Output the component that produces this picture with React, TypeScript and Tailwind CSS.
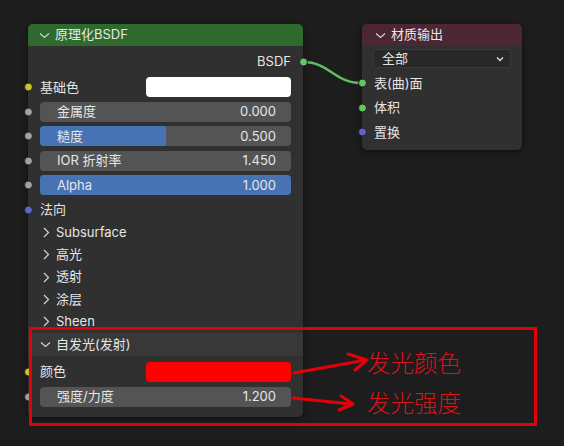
import React from "react";

const font = { fontFamily: 'Inter, "Noto Sans CJK SC", sans-serif' };

type SocketColor = "yellow" | "grey" | "purple" | "green";

const socketClass: Record<SocketColor, string> = {
  yellow: "bg-[#c7c729]",
  grey: "bg-[#a1a1a1]",
  purple: "bg-[#6363c7]",
  green: "bg-[#63c763]",
};

function Socket({ color, side = "left" }: { color: SocketColor; side?: "left" | "right" }) {
  return (
    <span
      className={`absolute top-1/2 -translate-y-1/2 w-[9px] h-[9px] rounded-full border-[0.5px] border-[#202020] ${
        socketClass[color]
      } ${side === "left" ? "-left-[4.5px]" : "-right-[4.5px]"}`}
    />
  );
}

function Chevron({ open }: { open: boolean }) {
  return (
    <svg width="11" height="11" viewBox="0 0 11 11" className="shrink-0">
      {open ? (
        <path d="M1 3.5 L5.5 7.5 L10 3.5" fill="none" stroke="#d4d4d4" strokeWidth="1.2" />
      ) : (
        <path d="M3 1 L7.5 5.5 L3 10" fill="none" stroke="#d4d4d4" strokeWidth="1.2" />
      )}
    </svg>
  );
}

function Slider({
  label,
  value,
  fill,
  socket,
}: {
  label: string;
  value: string;
  fill: number;
  socket?: SocketColor;
}) {
  return (
    <div className="relative h-[24.5px] flex items-center pl-[12px] pr-[12px]">
      {socket && <Socket color={socket} />}
      <div className="relative w-full h-[20px] rounded-[4px] bg-[#545454] overflow-hidden">
        <div className="absolute inset-y-0 left-0 bg-[#4772b3]" style={{ width: `${fill * 100}%` }} />
        <div className="relative h-full flex items-center justify-between pl-[17px] pr-[15px] text-[13px] text-[#e6e6e6]">
          <span>{label}</span>
          <span>{value}</span>
        </div>
      </div>
    </div>
  );
}

function ColorRow({ label, color, socket }: { label: string; color: string; socket: SocketColor }) {
  return (
    <div className="relative h-[24.5px] flex items-center pl-[12px] pr-[12px]">
      <Socket color={socket} />
      <span className="flex-1 text-[13px] text-[#e6e6e6]">{label}</span>
      <div className={`w-[145px] h-[20px] rounded-[4px] ${color}`} />
    </div>
  );
}

function PanelRow({ label }: { label: string }) {
  return (
    <div className="h-[22.3px] flex items-center gap-[4px] pl-[13px] text-[13px] text-[#e6e6e6]">
      <Chevron open={false} />
      <span>{label}</span>
    </div>
  );
}

function PrincipledNode() {
  return (
    <div className="absolute left-[28px] top-[24px] w-[275px] h-[393px] rounded-[5px] bg-[#303030] shadow-[0_2px_6px_rgba(0,0,0,0.5)]">
      <div className="h-[22px] rounded-t-[5px] bg-[#2e6a2e] flex items-center gap-[5px] pl-[11px] text-[13px] text-[#e8e8e8]">
        <Chevron open />
        <span>原理化BSDF</span>
      </div>
      <div className="pt-[5px]">
        <div className="relative h-[22px] flex items-center justify-end pr-[12px] text-[13px] text-[#e6e6e6]">
          <span>BSDF</span>
          <Socket color="green" side="right" />
        </div>
        <div className="pt-[2px]">
          <ColorRow label="基础色" color="bg-white" socket="yellow" />
          <Slider label="金属度" value="0.000" fill={0} socket="grey" />
          <Slider label="糙度" value="0.500" fill={0.5} socket="grey" />
          <Slider label="IOR 折射率" value="1.450" fill={0} socket="grey" />
          <Slider label="Alpha" value="1.000" fill={1} socket="grey" />
        </div>
        <div className="relative h-[24px] flex items-center pl-[12px] text-[13px] text-[#e6e6e6]">
          <Socket color="purple" />
          <span>法向</span>
        </div>
        <PanelRow label="Subsurface" />
        <PanelRow label="高光" />
        <PanelRow label="透射" />
        <PanelRow label="涂层" />
        <PanelRow label="Sheen" />
        <div className="h-[23px] bg-[#383838] flex items-center gap-[5px] pl-[12px] text-[13px] text-[#e6e6e6]">
          <Chevron open />
          <span>自发光(发射)</span>
        </div>
        <div className="pt-[4px]">
          <ColorRow label="颜色" color="bg-[#ff0000]" socket="yellow" />
          <Slider label="强度/力度" value="1.200" fill={0} socket="grey" />
        </div>
      </div>
    </div>
  );
}

function OutputNode() {
  return (
    <div className="absolute left-[362px] top-[24px] w-[160px] h-[126px] rounded-[5px] bg-[#303030] shadow-[0_2px_6px_rgba(0,0,0,0.5)]">
      <div className="h-[22px] rounded-t-[5px] bg-[#4c2634] flex items-center gap-[5px] pl-[13px] text-[13px] text-[#e8e8e8]">
        <Chevron open />
        <span>材质输出</span>
      </div>
      <div className="px-[11px] pt-[3px]">
        <div className="h-[19px] rounded-[3px] bg-[#282828] border border-[#3a3a3a] flex items-center justify-between pl-[8px] pr-[5px] text-[13px] text-[#e6e6e6]">
          <span>全部</span>
          <svg width="10" height="10" viewBox="0 0 10 10">
            <path d="M2 3.5 L5 6.5 L8 3.5" fill="none" stroke="#e0e0e0" strokeWidth="1.4" />
          </svg>
        </div>
      </div>
      <div className="pt-[3px]">
        {[
          { label: "表(曲)面", color: "green" as SocketColor },
          { label: "体积", color: "green" as SocketColor },
          { label: "置换", color: "purple" as SocketColor },
        ].map((s) => (
          <div key={s.label} className="relative h-[24.5px] flex items-center pl-[12px] text-[13px] text-[#e6e6e6]">
            <Socket color={s.color} />
            <span>{s.label}</span>
          </div>
        ))}
      </div>
    </div>
  );
}

export default function App() {
  return (
    <div className="relative w-[564px] h-[446px] bg-[#1d1d1d] overflow-hidden" style={font}>
      {/* link between nodes */}
      <svg className="absolute inset-0" width="564" height="446">
        <path d="M303 62 C 330 62, 334 83, 361 83" fill="none" stroke="#5fbf5f" strokeWidth="2.5" />
      </svg>

      <PrincipledNode />
      <OutputNode />

      {/* annotation overlay */}
      <div className="absolute left-[29px] top-[327px] w-[508px] h-[99px] border-[3px] border-[#e3000b]" />
      <svg className="absolute inset-0 pointer-events-none" width="564" height="446">
        <g fill="none" stroke="#e3000b" strokeWidth="3" strokeLinecap="round" strokeLinejoin="round">
          <path d="M294 373 L366 360" />
          <path d="M348 354 L367 360 L355 370" />
          <path d="M293 398 L352 404" />
          <path d="M341 396 L353 404 L339 410" />
        </g>
      </svg>
      <div
        className="absolute left-[367px] top-[349px] text-[23.5px] leading-[26px] font-light text-[#d8141c]"
        style={{ fontFamily: '"Noto Sans CJK SC", sans-serif' }}
      >
        发光颜色
      </div>
      <div
        className="absolute left-[367px] top-[389px] text-[23.5px] leading-[26px] font-light text-[#d8141c]"
        style={{ fontFamily: '"Noto Sans CJK SC", sans-serif' }}
      >
        发光强度
      </div>
    </div>
  );
}
